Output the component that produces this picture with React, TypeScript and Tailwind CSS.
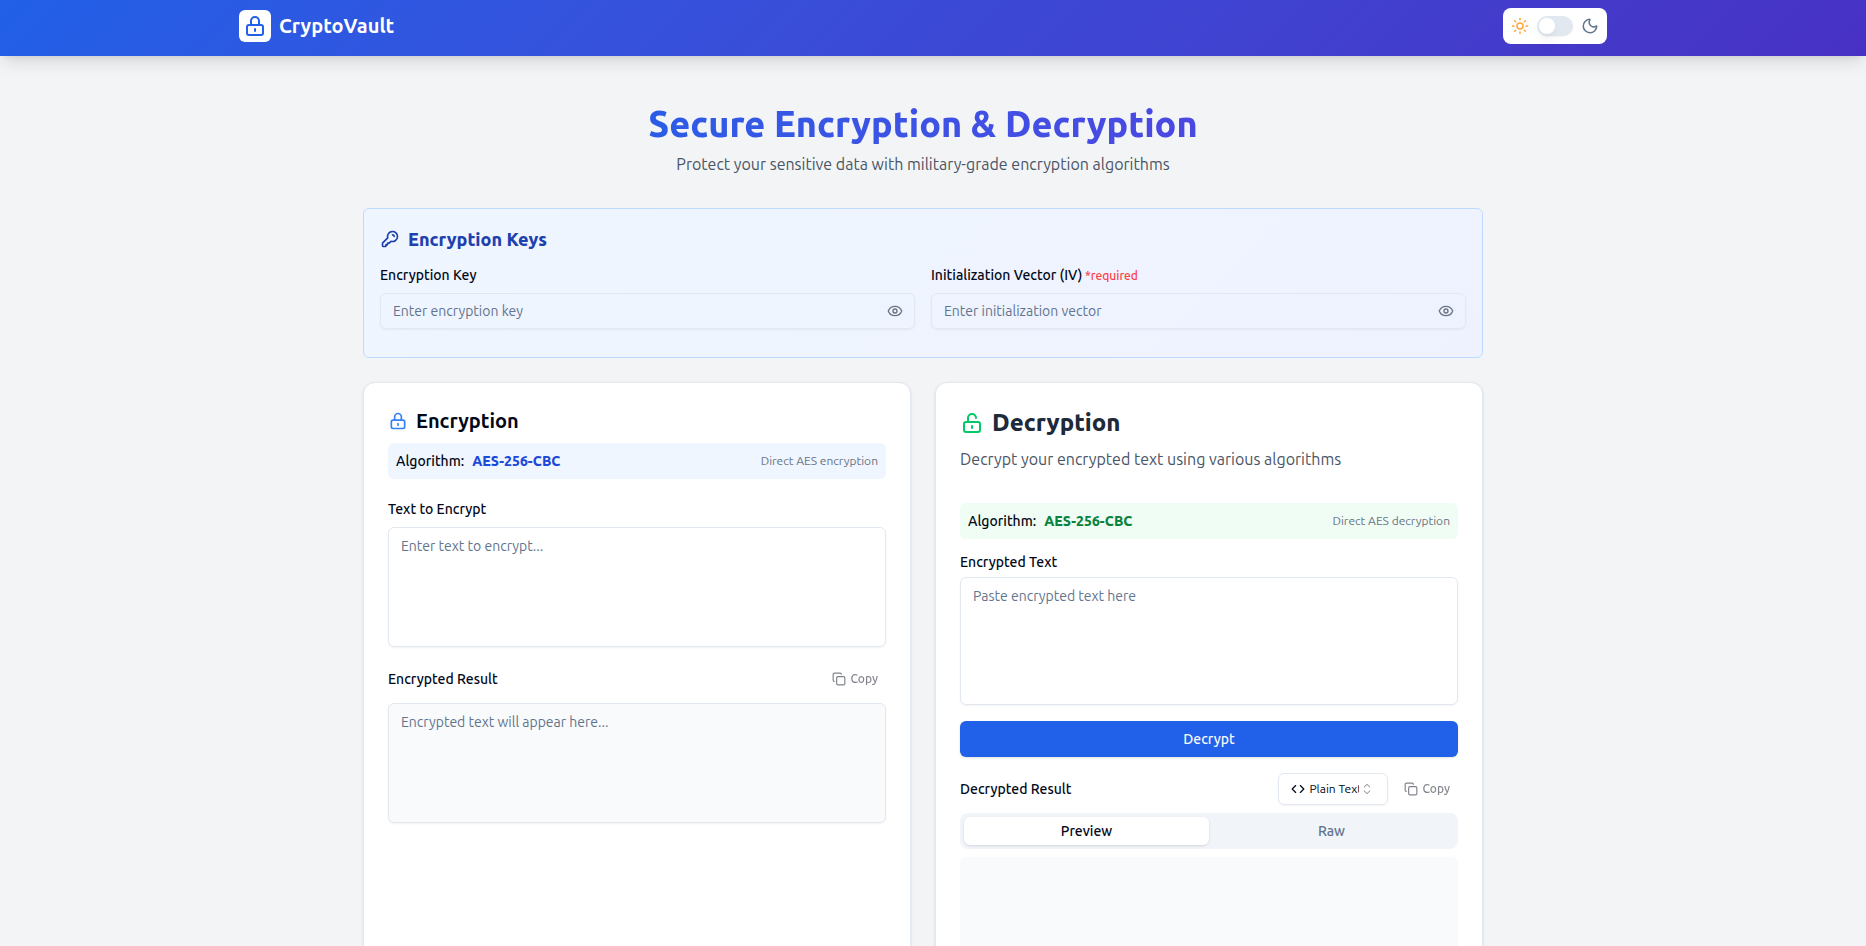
import { useState } from "react";
import type { ReactNode } from "react";
import { Code, Copy, Eye, Moon, Sun } from "lucide-react";

function OutlineIcon({ d, className }: { d: string; className: string }) {
  return (
    <svg
      viewBox="0 0 24 24"
      fill="none"
      stroke="currentColor"
      strokeWidth={2}
      strokeLinecap="round"
      strokeLinejoin="round"
      aria-hidden="true"
      className={className}
    >
      <path d={d} />
    </svg>
  );
}

const LOCK =
  "M12 15v2m-6 4h12a2 2 0 002-2v-6a2 2 0 00-2-2H6a2 2 0 00-2 2v6a2 2 0 002 2zm10-10V7a4 4 0 00-8 0v4h8z";
const UNLOCK =
  "M8 11V7a4 4 0 118 0m-4 8v2m-6 4h12a2 2 0 002-2v-6a2 2 0 00-2-2H6a2 2 0 00-2 2v6a2 2 0 002 2z";
const KEY =
  "M15 7a2 2 0 012 2m4 0a6 6 0 01-7.743 5.743L11 17H9v2H7v2H4a1 1 0 01-1-1v-2.586a1 1 0 01.293-.707l5.964-5.964A6 6 0 1121 9z";

function CaretSort() {
  return (
    <svg
      viewBox="0 0 16 16"
      fill="none"
      stroke="currentColor"
      strokeLinecap="round"
      strokeLinejoin="round"
      aria-hidden="true"
      className="pointer-events-none size-4 shrink-0 opacity-50"
    >
      <path d="M5.2 6 8 3.4 10.8 6M5.2 10 8 12.6 10.8 10" />
    </svg>
  );
}

function Header() {
  const [dark, setDark] = useState(false);
  return (
    <header className="bg-linear-135 from-[#2160e8] to-[#4731c4] pr-5 shadow-lg">
      <div className="mx-auto flex h-14 max-w-[1400px] items-center justify-between px-4 pb-1">
        <a href="#" className="flex items-center gap-2">
          <span className="rounded-md bg-white p-1 text-[#2160e8]">
            <OutlineIcon d={LOCK} className="size-6" />
          </span>
          <span className="text-xl font-bold text-white">CryptoVault</span>
        </a>
        <div className="flex items-center gap-2 rounded-lg bg-white p-2">
          <Sun size={18} className="text-[#ffa53d]" />
          <button
            type="button"
            role="switch"
            aria-checked={dark}
            aria-label="Dark mode"
            onClick={() => setDark(!dark)}
            className="flex h-5 w-9 items-center rounded-full bg-slate-200 p-0.5 shadow-xs"
          >
            <span className={dark ? "ml-auto size-4 rounded-full bg-white shadow-lg" : "size-4 rounded-full bg-white shadow-lg"} />
          </button>
          <Moon size={18} className="text-slate-500" />
        </div>
      </div>
    </header>
  );
}

function SecretField({ id, label, placeholder, required }: { id: string; label: string; placeholder: string; required?: boolean }) {
  const [visible, setVisible] = useState(false);
  return (
    <div className="space-y-2">
      <label htmlFor={id} className="block text-sm font-medium">
        {label}
        {required && <span className="text-xs text-[#fb4048]"> *required</span>}
      </label>
      <div className="relative">
        <input
          id={id}
          type={visible ? "text" : "password"}
          placeholder={placeholder}
          className="h-9 w-full rounded-md border border-slate-200 bg-transparent pr-10 pl-3 text-sm shadow-xs placeholder:text-slate-500"
        />
        <button
          type="button"
          aria-label="Show value"
          onClick={() => setVisible(!visible)}
          className="absolute inset-y-0 right-3 flex items-center text-gray-500"
        >
          <Eye size={16} />
        </button>
      </div>
    </div>
  );
}

function AlgorithmBar({ tone, note }: { tone: "blue" | "green"; note: string }) {
  return (
    <div className={tone === "blue" ? "flex h-9 items-center rounded-md bg-blue-50 px-2" : "flex h-9 items-center rounded-md bg-green-50 px-2"}>
      <span className="text-sm font-medium">Algorithm:</span>
      <span className={tone === "blue" ? "ml-2 text-sm font-extrabold text-[#1d49d8]" : "ml-2 text-sm font-extrabold text-[#0b8240]"}>
        AES-256-CBC
      </span>
      <span className="ml-auto text-xs text-gray-500">{note}</span>
    </div>
  );
}

function CopyButton() {
  return (
    <button type="button" disabled className="flex h-8 items-center gap-1 rounded-md px-2 text-xs font-medium opacity-50">
      <Copy size={14} />
      Copy
    </button>
  );
}

function Card({ children }: { children: ReactNode }) {
  return <section className="rounded-xl border border-slate-200 bg-white p-6 shadow-sm">{children}</section>;
}

function EncryptionCard() {
  return (
    <Card>
      <h2 className="flex items-center gap-2 text-xl leading-7 font-semibold">
        <OutlineIcon d={LOCK} className="size-5 text-[#3480f6]" />
        Encryption
      </h2>
      <div className="mt-2">
        <AlgorithmBar tone="blue" note="Direct AES encryption" />
      </div>
      <label htmlFor="plain" className="mt-5 mb-2 block text-sm font-medium">
        Text to Encrypt
      </label>
      <textarea
        id="plain"
        placeholder="Enter text to encrypt..."
        className="block h-30 w-full resize-none rounded-md border border-slate-200 px-3 py-2 text-sm shadow-xs placeholder:text-slate-500"
      />
      <div className="mt-4 mb-2 flex items-center justify-between">
        <label htmlFor="cipher" className="text-sm font-medium">
          Encrypted Result
        </label>
        <CopyButton />
      </div>
      <textarea
        id="cipher"
        readOnly
        placeholder="Encrypted text will appear here..."
        className="block h-30 w-full resize-none rounded-md border border-slate-200 bg-gray-50 px-3 py-2 text-sm shadow-xs placeholder:text-slate-500"
      />
    </Card>
  );
}

function DecryptionCard() {
  const [tab, setTab] = useState("Preview");
  return (
    <Card>
      <h2 className="flex items-center gap-2 text-2xl font-extrabold text-gray-800">
        <OutlineIcon d={UNLOCK} className="size-6 text-[#00c967]" />
        Decryption
      </h2>
      <p className="mt-2 mb-8 text-base text-gray-600">Decrypt your encrypted text using various algorithms</p>
      <AlgorithmBar tone="green" note="Direct AES decryption" />
      <label htmlFor="encrypted" className="mt-4 mb-2 block text-sm leading-none font-medium">
        Encrypted Text
      </label>
      <textarea
        id="encrypted"
        placeholder="Paste encrypted text here"
        className="block h-32 w-full resize-none rounded-md border border-slate-200 px-3 py-2 text-sm shadow-xs placeholder:text-slate-500"
      />
      <button type="button" className="mt-4 h-9 w-full rounded-md bg-[#2160e8] text-sm font-medium text-slate-50 shadow-sm">
        Decrypt
      </button>
      <div className="mt-4 mb-2 flex items-center gap-2">
        <h3 className="mr-auto text-sm font-medium">Decrypted Result</h3>
        <div className="flex h-8 items-center rounded-md border border-slate-200 px-3 shadow-xs">
          <Code size={14} className="mr-1 shrink-0" />
          <select
            aria-label="Result format"
            className="w-[50px] appearance-none overflow-hidden bg-transparent text-xs text-clip whitespace-nowrap"
          >
            <option>Plain Text</option>
            <option>JSON</option>
          </select>
          <CaretSort />
        </div>
        <CopyButton />
      </div>
      <div role="tablist" className="grid h-9 grid-cols-2 rounded-lg bg-slate-100 p-1">
        {["Preview", "Raw"].map((name) => (
          <button
            key={name}
            type="button"
            role="tab"
            aria-selected={tab === name}
            onClick={() => setTab(name)}
            className={
              tab === name
                ? "rounded-md bg-white text-sm font-medium shadow-sm"
                : "rounded-md text-sm font-medium text-slate-500"
            }
          >
            {name}
          </button>
        ))}
      </div>
      <div role="tabpanel" className="mt-2 h-50 rounded-md bg-gray-50" />
    </Card>
  );
}

export default function App() {
  return (
    <div className="min-h-screen bg-gray-100 font-['Ubuntu','Noto_Sans',sans-serif] text-[#020817]">
      <Header />
      <div className="pr-5">
        <main className="mx-auto max-w-6xl px-4 py-12">
          <div className="mb-8 text-center">
            <h1 className="mx-auto mb-2 w-fit bg-linear-to-r from-[#2b5ce6] to-[#4a48e2] bg-clip-text text-4xl leading-10 font-extrabold text-transparent">
              Secure Encryption &amp; Decryption
            </h1>
            <p className="text-base text-gray-600">
              Protect your sensitive data with military-grade encryption algorithms
            </p>
          </div>
          <section className="mb-6 rounded-md border border-blue-200 bg-linear-135 from-blue-50 to-indigo-50 px-4 pt-4 pb-7">
            <h2 className="mb-3 flex items-center gap-2 text-lg font-extrabold text-[#1f40af]">
              <OutlineIcon d={KEY} className="size-5" />
              Encryption Keys
            </h2>
            <div className="grid grid-cols-2 gap-4">
              <SecretField id="key" label="Encryption Key" placeholder="Enter encryption key" />
              <SecretField id="iv" label="Initialization Vector (IV)" placeholder="Enter initialization vector" required />
            </div>
          </section>
          <div className="grid grid-cols-2 gap-6">
            <EncryptionCard />
            <DecryptionCard />
          </div>
        </main>
      </div>
    </div>
  );
}
